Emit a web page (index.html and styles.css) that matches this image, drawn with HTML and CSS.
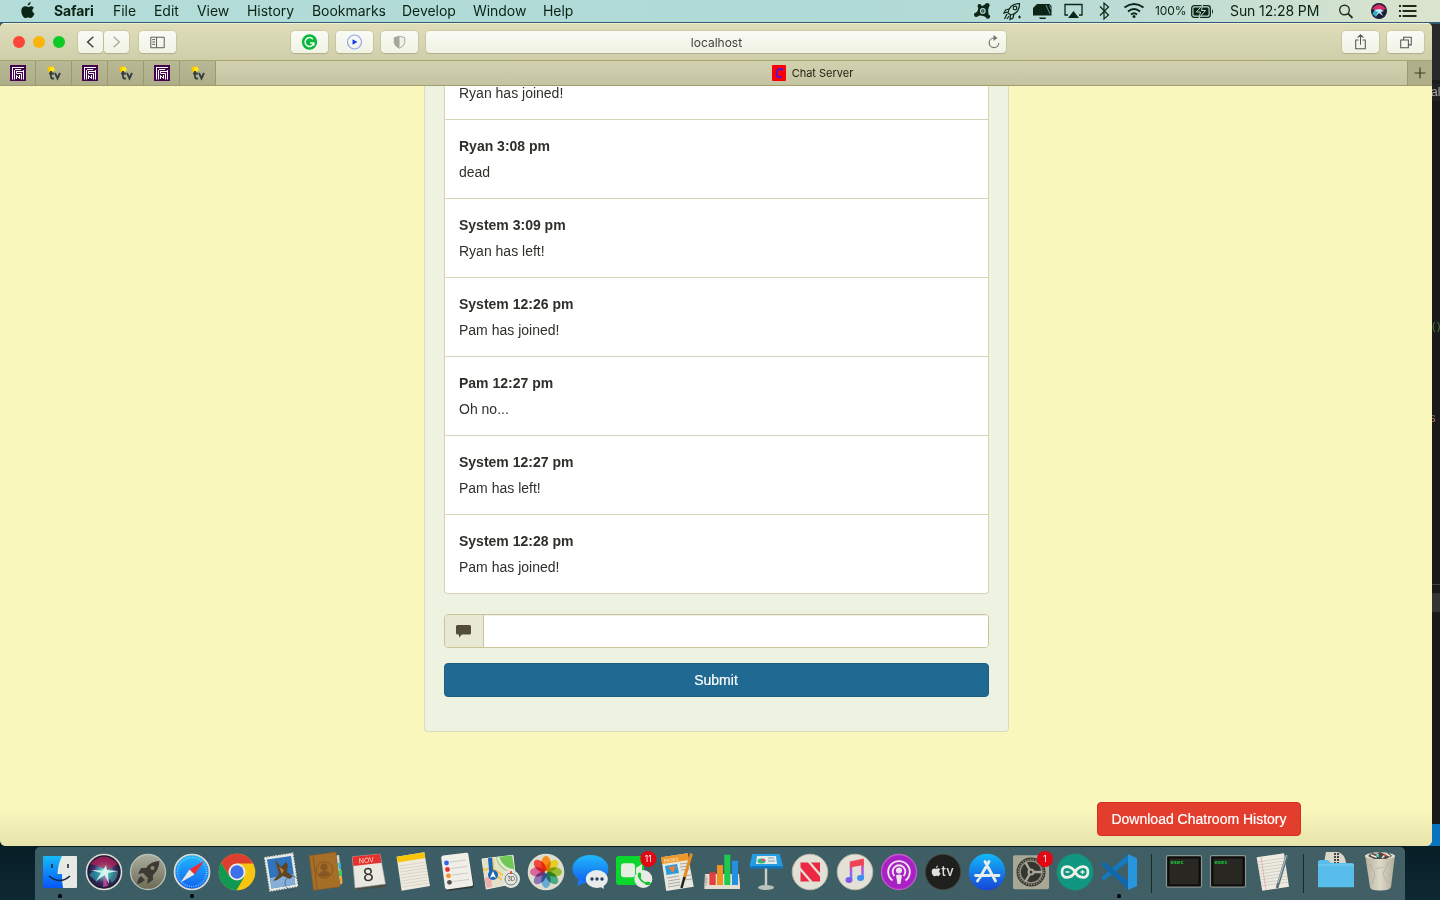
FILE: index.html
```html
<!DOCTYPE html>
<html lang="en">
<head>
<meta charset="utf-8">
<title>Chat Server</title>
<link rel="stylesheet" href="styles.css">
</head>
<body>
<div class="desktop">
  <header class="menubar">
    <svg class="apple" viewBox="0 0 14 17"><path d="M9.700 0C9.800 1.700 8.400 3.500 6.700 3.600 6.600 1.900 8 .3 9.700 0ZM12.900 5.800C10.600 7.300 11 10.500 13.500 11.500 12.700 13.800 11.300 16 9.800 16 8.800 16 8.400 15.400 7.200 15.400S5.500 16 4.600 16C2.400 16 .3 12.200.3 8.900.3 5.900 2.200 4.300 4.200 4.300 5.400 4.300 6.300 5 7.200 5S9 4.200 10.200 4.200C11.300 4.200 12.300 4.800 12.900 5.800Z"/></svg>
    <nav class="menus">
      <b class="m-safari">Safari</b><span class="m-file">File</span><span class="m-edit">Edit</span><span class="m-view">View</span><span class="m-history">History</span><span class="m-bookmarks">Bookmarks</span><span class="m-develop">Develop</span><span class="m-window">Window</span><span>Help</span>
    </nav>
    <svg class="status" viewBox="0 0 178 22">
      <path d="M6 6Q10 7 13.500 4L17 6.500Q15.500 10 16.500 14L13.500 17Q10 14.500 5 16L3.500 13.500Q7 10 6 6Z"/><circle cx="15.300" cy="5.200" r="2.300"/><circle cx="7.500" cy="6" r="2"/><circle cx="4.300" cy="14.800" r="2.300"/><circle cx="15.800" cy="16.500" r="2.300"/><circle cx="10.800" cy="11" r="2.300" fill="none" stroke="#b4dbd5" stroke-width="1.200"/><circle cx="10.800" cy="11" r=".8" fill="#b4dbd5"/>
      <g fill="none" stroke="#0b2517" stroke-width="1.200"><path d="M36 13C37 7 41 3.500 47.500 3.500 47.500 10 44 14 39 15Z"/><circle cx="43" cy="8" r="1.800"/><path d="M37 9 33.500 10 32 13 36 12M42 14 41 18 38 19.500 38.500 15M35 14 32.500 19M37 16 35 19"/></g><path d="M46 17h3M47.500 15.500v3" stroke="#0b2517"/>
      <path d="M65 4H77.500L79.500 6V15.500H61V8ZM67 17.500H73.500L74 19H68Z"/><path d="M74 5 78 14M77.500 5.500 79 9" stroke="#b4dbd5" stroke-width=".6"/>
      <path d="M96 15H93V4.500H110V15H107" fill="none" stroke="#0b2517" stroke-width="1.300"/><path d="M101.500 11 107 18H96Z"/>
      <path d="M128 6.500 136.500 15 132 19V3L136.500 7 128 15.500" fill="none" stroke="#0b2517" stroke-width="1.200"/>
      <g fill="none" stroke="#0b2517" stroke-width="2"><path d="M152.500 7.500Q162 .5 171.500 7.500M156 11.500Q162 6.500 168 11.500M159 14.500Q162 12 165 14.500"/></g><circle cx="162" cy="16.500" r="1.500"/>
    </svg>
    <span class="pct">100%</span>
    <svg class="battery" viewBox="0 0 23 13"><rect x=".7" y=".7" width="18.600" height="11.600" rx="2.500" fill="none" stroke="#10291a" stroke-width="1.300"/><rect x="2.500" y="2.500" width="15" height="8" rx="1"/><path d="M21 4q2 2.500 0 5Z"/><path d="M11.500 0 5.500 7H9.500L8 13 14.500 5.500H10.500Z" stroke="#c3dfd3" stroke-width="1"/></svg>
    <span class="clock">Sun 12:28 PM</span>
    <svg class="tray" viewBox="0 0 82 22">
      <circle cx="6.500" cy="10" r="4.800" fill="none" stroke="#253020" stroke-width="1.400"/><path d="M10 13.500 14.500 18" stroke="#253020" stroke-width="1.800"/>
      <circle cx="41" cy="11" r="8" fill="#1c1d36"/><path d="M34 9Q41 0 48 9L42 11Z" fill="#d72e66"/><path d="M34.500 14Q36 8 42 10L38 17Z" fill="#3aa8c9"/><path d="M36 10 42 9 46 11 43 12 45 16 41 13 38 16 40 12Z" fill="#bdeeff"/>
      <path d="M64.500 6h14M64.500 11h14M64.500 16h14" stroke="#202b17" stroke-width="2"/><path d="M61 6h2M61 11h2M61 16h2" stroke="#202b17" stroke-width="2"/>
    </svg>
  </header>

  <aside class="editor"><i class="e-title">al</i><i class="e-paren">()</i><i class="e-str">s</i><div class="e-panel"></div><div class="e-status"></div></aside>

  <section class="browser">
    <div class="toolbar">
      <div class="lights"><i class="red"></i><i class="amber"></i><i class="green"></i></div>
      <div class="history-buttons">
        <button class="tb half"><svg viewBox="0 0 26 23"><path d="M16 6 10 11.500 16 17" fill="none" stroke="#444" stroke-width="1.600"/></svg></button>
        <button class="tb half"><svg viewBox="0 0 26 23"><path d="M10 6 16 11.500 10 17" fill="none" stroke="#aaa99f" stroke-width="1.400"/></svg></button>
      </div>
      <button class="tb sidebar"><svg viewBox="0 0 37 23"><path d="M11.500 6.500H25.500V17.500H11.500ZM17.500 6.500V17.500M13 9h3M13 11.500h3M13 14h3" fill="none" stroke="#555"/></svg></button>
      <div class="extensions">
        <button class="tb"><svg viewBox="0 0 38 23"><circle cx="19" cy="11.500" r="8" fill="#07b83b"/><path d="M22.500 8.500A4.600 4.600 0 1 0 23.500 12.500H19.500M23.500 12V15.500" fill="none" stroke="#f0fff2" stroke-width="1.600"/></svg></button>
        <button class="tb"><svg viewBox="0 0 38 23"><circle cx="19" cy="11.500" r="7.300" fill="none" stroke="#91a4ef" stroke-width="1.200"/><path d="M17 8.500 22 11.500 17 14.500Z" fill="#1538ee"/></svg></button>
        <button class="tb"><svg viewBox="0 0 38 23"><path d="M19 5.500 24.500 7V12Q24 16 19 18 14 16 13.500 12V7Z" fill="#f2f2e9" stroke="#a4a59b"/><path d="M19 5.500V18Q14 16 13.500 12V7Z" fill="#a4a59b"/></svg></button>
      </div>
      <div class="address"><span>localhost</span><svg viewBox="0 0 12 14"><path d="M7 3H6A4.800 4.800 0 1 0 10.800 8" fill="none" stroke="#74746c" stroke-width="1.200"/><path d="M5.500 0 9.500 3 5.500 6Z" fill="#74746c"/></svg></div>
      <div class="actions">
        <button class="tb"><svg viewBox="0 0 37 23"><path d="M16.500 9.500H13.500V18.500H23.500V9.500H20.500M18.500 14.500V4.500M15.500 7 18.500 4 21.500 7" fill="none" stroke="#555" stroke-width="1.100"/></svg></button>
        <button class="tb"><svg viewBox="0 0 37 23"><path d="M13.500 9.500H21.500V17.500H13.500ZM16.500 9V6.500H24.500V14.500H22" fill="none" stroke="#555" stroke-width="1.100"/></svg></button>
      </div>
    </div>
    <svg class="defs"><defs>
      <symbol id="hall" viewBox="0 0 16 16"><rect width="16" height="16" fill="#44054f"/><path d="M2 2.500H14M2.500 2V14.500M13.500 5V14.500M5 4.500H11M4.500 5V14.500M7 6.500H13M6.500 6V8.500H11.500V14.500M6.500 14V10.500L9.500 13.500V10" fill="none" stroke="#fff" stroke-width="1"/></symbol>
      <symbol id="tv" viewBox="0 0 16 16"><path d="M1.500 2 5 1 9 5 4 8 2 7Z" fill="#ffc400"/><path d="M4 3 7 1.500 9 5 5 7Z" fill="#f8ef14"/><path d="M5 6V12Q5 14 8 13.500M3 8.500H8M9 8 11.500 13.500 14 8" fill="none" stroke="#303f42" stroke-width="1.900"/></symbol>
    </defs></svg>
    <div class="tabs">
      <div class="pin"><svg><use href="#hall"/></svg></div><div class="pin"><svg><use href="#tv"/></svg></div><div class="pin"><svg><use href="#hall"/></svg></div><div class="pin"><svg><use href="#tv"/></svg></div><div class="pin"><svg><use href="#hall"/></svg></div><div class="pin"><svg><use href="#tv"/></svg></div>
      <div class="active-tab"><svg viewBox="0 0 16 16"><rect x="1" width="14" height="16" rx="1" fill="#fb0007"/><path d="M11 6V4Q6 3 5.500 8T10.500 12" fill="none" stroke="#4b14e0" stroke-width="1.700"/></svg><span>Chat Server</span></div>
      <div class="new-tab"><svg viewBox="0 0 12 12"><path d="M.5 6h11M6 .5v11" stroke="#3d3d20" stroke-width="1.200"/></svg></div>
    </div>
    <main class="page">
      <div class="well">
        <ul class="messages">
          <li class="cut"><p>Ryan has joined!</p></li>
          <li><b>Ryan 3:08 pm</b><p>dead</p></li>
          <li><b>System 3:09 pm</b><p>Ryan has left!</p></li>
          <li><b>System 12:26 pm</b><p>Pam has joined!</p></li>
          <li><b>Pam 12:27 pm</b><p>Oh no...</p></li>
          <li><b>System 12:27 pm</b><p>Pam has left!</p></li>
          <li><b>System 12:28 pm</b><p>Pam has joined!</p></li>
        </ul>
        <div class="field"><span><svg viewBox="0 0 15 13"><path d="M1.500 0H13.500Q15 0 15 1.500V8Q15 9.500 13.500 9.500H6L3 12.500V9.500H1.500Q0 9.500 0 8V1.500Q0 0 1.500 0Z" fill="#524c39"/></svg></span><input type="text" aria-label="Message"></div>
        <button class="submit">Submit</button>
      </div>
      <button class="download">Download Chatroom History</button>
    </main>
  </section>

  <footer class="dock">
    <svg class="defs"><defs>
      <linearGradient id="blue" x2="0" y2="1"><stop stop-color="#20b9fb"/><stop offset="1" stop-color="#1260f0"/></linearGradient>
      <linearGradient id="finder" x2="0" y2="1"><stop stop-color="#17baf7"/><stop offset="1" stop-color="#0755fb"/></linearGradient>
      <linearGradient id="store" x2="0" y2="1"><stop stop-color="#12b9fa"/><stop offset="1" stop-color="#1744d8"/></linearGradient>
      <linearGradient id="rocket" x2="0" y2="1"><stop stop-color="#aaaea0"/><stop offset="1" stop-color="#6d6b55"/></linearGradient>
      <radialGradient id="siri"><stop stop-color="#e6ffff"/><stop offset=".25" stop-color="#54b8bd"/><stop offset=".6" stop-color="#42306a"/><stop offset="1" stop-color="#14152b"/></radialGradient>
      <linearGradient id="note" x2="0" y2="1"><stop stop-color="#fb4050"/><stop offset=".5" stop-color="#bd4fdc"/><stop offset="1" stop-color="#3b90ff"/></linearGradient>
      <linearGradient id="can" x2="1" y2="0"><stop stop-color="#b5b09c"/><stop offset=".5" stop-color="#dedac9"/><stop offset="1" stop-color="#b1ab98"/></linearGradient>
      <symbol id="exec" viewBox="0 0 44 53"><rect x="4.500" y="8.700" width="35" height="31.500" rx="1.500" fill="#0c0d0b" stroke="#8c9690" stroke-width="1.200"/><rect x="7.500" y="11.500" width="29" height="26" fill="#292722"/><text x="8.500" y="17.300" class="exec-text">exec</text></symbol>
    </defs></svg>
    <div class="app running"><svg viewBox="0 0 44 53"><rect x="5" y="9" width="34" height="32" rx="1" fill="url(#finder)"/><path d="M24 9H38Q39 9 39 10V40Q39 41 38 41H25Q24 35 24 27H19.500Q20 17 24 9Z" fill="#e7eae4"/><path d="M14 17v4M30 17v4" stroke="#123" stroke-width="1.500"/><path d="M11 29Q22 38 32 29" fill="none" stroke="#132538" stroke-width="1.500"/></svg></div>
    <div class="app"><svg viewBox="0 0 44 53"><circle cx="22" cy="25" r="17.500" fill="url(#siri)" stroke="#dad9d2" stroke-width="1.600"/><path d="M8 17Q22 2 36 17L25 23 16 19Z" fill="#c81f55" opacity=".65"/><path d="M7 28Q16 19 22 25L15 35Z" fill="#2397a5" opacity=".7"/><path d="M23 25 36 24Q36 31 30 36Z" fill="#34bfae" opacity=".5"/><path d="M22 25 26 39 21 40Z" fill="#ed4ea5" opacity=".7"/><path d="M9 23 21 23.500 24 18 25 23 36 24 26 26 27 37 22.500 28 14 34 19 26Z" fill="#dffbf3" opacity=".9"/></svg></div>
    <div class="app"><svg viewBox="0 0 44 53"><circle cx="22" cy="25" r="17.500" fill="url(#rocket)" stroke="#bcc0b4" stroke-width="1.300"/><path d="M33.500 14Q25 14 20 21L15 21 12 27 17 26 22 31 21 37 27 33V28Q33 23 33.500 14ZM15 29 19 33Q16 36 11 37 12 31 15 29Z" fill="#3c3b33"/><circle cx="26.500" cy="21" r="2" fill="#85887a"/></svg></div>
    <div class="app running"><svg viewBox="0 0 44 53"><circle cx="22" cy="25" r="17.500" fill="url(#blue)" stroke="#dfdcd0" stroke-width="1.700"/><circle cx="22" cy="25" r="14.500" fill="none" stroke="#9ce2f7" stroke-width="1.600" stroke-dasharray=".7 1.570"/><path d="M34 14 24.500 27.500 19.500 22.500Z" fill="#f32b31"/><path d="M10.500 35.500 19.500 22.500 24.500 27.500Z" fill="#e8e8e2"/></svg></div>
    <div class="app"><svg viewBox="0 0 44 53"><circle cx="22" cy="25" r="18.300" fill="#f8c60e"/><path d="M22 16.500H38.200A18.300 18.300 0 0 0 6.200 15.700L14.500 29.500Z" fill="#dd3e2e"/><path d="M6.200 15.700A18.300 18.300 0 0 0 21.500 43.300L29.500 29.500 14.500 29.500Z" fill="#119954"/><circle cx="22" cy="25" r="8.500" fill="#eceee7"/><circle cx="22" cy="25" r="6.700" fill="#3e70eb"/></svg></div>
    <div class="app"><svg viewBox="0 0 44 53"><path d="M5.700 10.700 33.700 6.300 38.700 39.300 11 44Z" fill="#e8e9e2" stroke="#e8e9e2" stroke-width="1.400" stroke-dasharray="1.600 1.100"/><path d="M8 12.500 32 9 36.300 37.500 12.500 41.500Z" fill="#2f74bd"/><path d="M11 31 35.300 27 36.300 37.500 12.500 41.500Z" fill="#86afd8"/><path d="M16 13 22 20 27 15 29 18 28 25 34 29 31 32 24 29 18 33 14 34 20 27Z" fill="#604525"/><path d="M20 20 25 23 23 27Z" fill="#b9823a"/><circle cx="33" cy="36" r="7" fill="none" stroke="#304d59" opacity=".6"/></svg></div>
    <div class="app"><svg viewBox="0 0 44 53"><path d="M31 9 36 8 39 37 33 38Z" fill="#d3dddd"/><path d="M35 16 38 16 38 22 36 22Z" fill="#23b7c9"/><path d="M36 23 39 23 39 29 36 29Z" fill="#42ce56"/><path d="M37 30 39 29 39.500 36 37 37Z" fill="#f0a62a"/><path d="M6.200 8.700 32.900 5 37.200 39.700 10.500 43.300Z" fill="#a76e27" stroke="#8a5a24" stroke-width=".6"/><path d="M10 9 14 42" stroke="#8c581f"/><circle cx="21.500" cy="23" r="8.300" fill="none" stroke="#875723"/><circle cx="21" cy="20" r="3.500" fill="#875723"/><path d="M15 28Q21 20 28 27 22 33 15 28Z" fill="#875723"/></svg></div>
    <div class="app"><svg viewBox="0 0 44 53"><path d="M7 36 39 34 39 40 9 43Z" fill="#4a4d43"/><path d="M5.400 9.700 33 7 38.500 37 8 41Z" fill="#e9e9e1" stroke="#a7a99d" stroke-width=".6"/><path d="M5.400 9.700 33 7 34.500 15.700 6.500 19Z" fill="#e6302d"/><text x="12" y="16.500" class="cal-month" transform="rotate(-5 12 16.500)">NOV</text><text x="15.700" y="34" class="cal-day" transform="rotate(-5 22 28)">8</text></svg></div>
    <div class="app"><svg viewBox="0 0 44 53"><path d="M5.600 9.700 33.300 5.300 39 39 10.600 43.700Z" fill="#eeeade"/><path d="M5.600 9.700 33.300 5.300 34.300 11 6.500 15.500Z" fill="#f8c50a"/><path d="M8 19 35 15M8.500 22 35.500 18M9 25 36 21M9 28 36 24M9.500 31 37 27M10 34 37 30M10 37 37.500 33M10.500 40 38 36" stroke="#c9c6b6" stroke-width=".6"/></svg></div>
    <div class="app"><svg viewBox="0 0 44 53"><path d="M7 10 33 7 39 38 37.500 41 12 44Z" fill="#303a36"/><path d="M8 8.500 31 5.700Q33 5.500 33.300 7L38 37Q38.300 38.700 37 39L12 42.500 10 41 6.200 11Q6 9 8 8.500Z" fill="#efeee7"/><path d="M15 15 31 13M16 21.500 32 19.500M17 28 33 26M18 34.500 34 32.500" stroke="#bbb" stroke-width=".7"/><circle cx="11.500" cy="16" r="2.400" fill="#3566e6"/><circle cx="12.500" cy="22.500" r="2.400" fill="#ec3131"/><circle cx="13.500" cy="28.800" r="2.400" fill="#f29329"/><circle cx="14.500" cy="35.300" r="2.400" fill="#54524b"/></svg></div>
    <div class="app"><svg viewBox="0 0 44 53"><path d="M3 12 34 8.300 37 36 7.300 42Z" fill="#e4dfc7" stroke="#f2eee0"/><path d="M17 10 33 8.500 36 25Q20 25 17 10Z" fill="#70c957"/><path d="M19 10Q22 22 36 24" fill="none" stroke="#e6e5d7" stroke-width="3"/><path d="M5 31 12 30 13 40 8 41Z" fill="#eaaead"/><path d="M13 11 15 26 23 33M4 23 13 21 35 36" fill="none" stroke="#f4c348" stroke-width="2"/><path d="M11 11 12.500 28" stroke="#1667b9" stroke-width="4"/><circle cx="14" cy="28" r="5" fill="#1764b8"/><path d="M14 24 17 31 14 29.500 11 31Z" fill="#fff"/><circle cx="32" cy="32" r="9" fill="#e7e5da"/><circle cx="32" cy="32" r="6" fill="none" stroke="#548393" stroke-width="1"/><path d="M32 24v3" stroke="#e32" stroke-width="1.500"/><text x="28.500" y="34" class="map-text">3D</text></svg></div>
    <div class="app"><svg viewBox="0 0 44 53"><circle cx="22" cy="25" r="18.300" fill="#dddccd"/><g class="petals"><ellipse cx="22" cy="16.500" rx="4.700" ry="7.500" fill="#f98b18"/><ellipse cx="22" cy="16.500" rx="4.700" ry="7.500" fill="#e4cf27" transform="rotate(45 22 25)"/><ellipse cx="22" cy="16.500" rx="4.700" ry="7.500" fill="#99be34" transform="rotate(90 22 25)"/><ellipse cx="22" cy="16.500" rx="4.700" ry="7.500" fill="#4ca982" transform="rotate(135 22 25)"/><ellipse cx="22" cy="16.500" rx="4.700" ry="7.500" fill="#6aa9d1" transform="rotate(180 22 25)"/><ellipse cx="22" cy="16.500" rx="4.700" ry="7.500" fill="#8d76b6" transform="rotate(225 22 25)"/><ellipse cx="22" cy="16.500" rx="4.700" ry="7.500" fill="#d9679d" transform="rotate(270 22 25)"/><ellipse cx="22" cy="16.500" rx="4.700" ry="7.500" fill="#f1463e" transform="rotate(315 22 25)"/></g></svg></div>
    <div class="app"><svg viewBox="0 0 44 53"><ellipse cx="22.400" cy="22" rx="18" ry="14" fill="url(#blue)"/><path d="M11 32 9 39 19 35Z" fill="#1479f3"/><ellipse cx="28.800" cy="32" rx="11" ry="9" fill="#e8edec"/><path d="M31 39 36 42 35 36Z" fill="#e8edec"/><g fill="#263f60"><circle cx="24" cy="32" r="1.700"/><circle cx="29" cy="32" r="1.700"/><circle cx="34" cy="32" r="1.700"/></g></svg></div>
    <div class="app"><svg viewBox="0 0 44 53"><rect x="4" y="9" width="28" height="29" rx="3" fill="#0bd62d"/><rect x="9" y="16.300" width="14" height="14" rx="3" fill="#e5ece0"/><path d="M24 21 30 17V29L24 26Z" fill="#e5ece0"/><circle cx="31.300" cy="32" r="9" fill="#e7ebe3"/><path d="M27 28Q28 35.500 35.500 36.500" fill="none" stroke="#13c32c" stroke-width="1.800"/><path d="M27.500 27v2.500M34.500 36.300h2.500" stroke="#13c32c" stroke-width="3.200" stroke-linecap="round"/><circle cx="36.300" cy="12" r="8" fill="#e30613"/><text x="36.300" y="15" class="badge">11</text></svg></div>
    <div class="app"><svg viewBox="0 0 44 53"><path d="M5.200 10.300 31.500 6.300 37.800 39.700 10.200 44Z" fill="#e9e8dd"/><path d="M5.200 10.300 31.500 6.300 33 13 6 17Z" fill="#ed982a"/><text x="8" y="15.500" class="pages-text" transform="rotate(-8 8 15.500)">PAGES</text><path d="M9 19 21 17 23 26 10.500 28Z" fill="#269bdf"/><path d="M12 20 20 19 17 26Z" fill="#ee7c31"/><path d="M24 17 33 16M24 20 33 19M25 23 34 22M11 31 23 29M12 34 24 32M12 37 24 35M12 40 24 38M28 29 35 28M28 33 36 32" stroke="#aaa" stroke-width="1"/><path d="M35.500 6.500 28 32" stroke="#e68a21" stroke-width="3"/><path d="M28.500 30 25.500 41" stroke="#222" stroke-width="2.500"/></svg></div>
    <div class="app"><svg viewBox="0 0 44 53"><path d="M5 27H39L40 38V42H4.400V38Z" fill="#e2ded1"/><path d="M5 32H8M5 35H8M6 28V39" stroke="#999" stroke-width=".7"/><rect x="9.400" y="25.300" width="6.300" height="12.700" fill="#e2403f"/><rect x="17" y="18" width="6" height="20" fill="#f29021"/><rect x="24.300" y="7.700" width="6" height="30.300" fill="#1ec951"/><rect x="32" y="13.700" width="6" height="24.300" fill="#2391e0"/></svg></div>
    <div class="app"><svg viewBox="0 0 44 53"><rect x="20.800" y="21" width="2.400" height="19" fill="#cbcfc8"/><ellipse cx="22" cy="40.500" rx="8" ry="2.500" fill="#b9c1bb"/><path d="M8.300 7H35.600L39 19H5.600Z" fill="#269de2"/><path d="M5.600 19H39V21.500H5.600Z" fill="#0d77c4"/><path d="M13 9H32L33 17H12Z" fill="#e6ebe5"/><ellipse cx="17.500" cy="14" rx="4" ry="2.500" fill="#36b875"/><path d="M17.500 14V11.500A4 2.500 0 0 1 21.500 14Z" fill="#e34b86"/><path d="M24 11H30M24 14H31" stroke="#7a9eb4"/></svg></div>
    <div class="app"><svg viewBox="0 0 44 53"><circle cx="22" cy="25" r="17.800" fill="#e3e1d6" stroke="#b8b8aa"/><path d="M12.500 15.500H20L32 29.500V34.500H24.500L12.500 20.500ZM23 15.500H32V26ZM12.500 24V34.500H21.500Z" fill="#ec2945"/></svg></div>
    <div class="app"><svg viewBox="0 0 44 53"><circle cx="22" cy="25" r="17.800" fill="#e3e1d6" stroke="#b8b8aa"/><path d="M18 33V15.500L29.500 13V31" fill="none" stroke="url(#note)" stroke-width="2.500"/><path d="M17 15.500 30.700 13V18L17 20.500Z" fill="#ee4352"/><ellipse cx="16" cy="33" rx="3.500" ry="3" fill="#805ae8"/><ellipse cx="27.500" cy="31" rx="3.500" ry="3" fill="#3c8ff0"/></svg></div>
    <div class="app"><svg viewBox="0 0 44 53"><circle cx="22" cy="25" r="17.500" fill="#a921c4" stroke="#c15dca" stroke-width="1.300"/><path d="M15.500 33.500A10.800 10.800 0 1 1 28.500 33.500M17.500 29A6.300 6.300 0 1 1 26.500 29" fill="none" stroke="#f0e4f0" stroke-width="1.900"/><circle cx="22" cy="23.500" r="3" fill="#f0e4f0"/><path d="M19 28.500Q22 26.500 25 28.500L23.500 37H20.500Z" fill="#f0e4f0"/></svg></div>
    <div class="app"><svg viewBox="0 0 44 53"><circle cx="22" cy="25" r="17.800" fill="#1f201e" stroke="#464b47"/><path transform="translate(10.500 18.500) scale(.67)" fill="#e2e0da" d="M9.700 0C9.800 1.700 8.400 3.500 6.700 3.600 6.600 1.900 8 .3 9.700 0ZM12.900 5.800C10.600 7.300 11 10.500 13.500 11.500 12.700 13.800 11.300 16 9.800 16 8.800 16 8.400 15.400 7.200 15.400S5.500 16 4.600 16C2.400 16 .3 12.200.3 8.900.3 5.900 2.200 4.300 4.200 4.300 5.400 4.300 6.300 5 7.200 5S9 4.200 10.200 4.200C11.300 4.200 12.300 4.800 12.900 5.800Z"/><text x="20.500" y="29" class="tv-text">tv</text></svg></div>
    <div class="app"><svg viewBox="0 0 44 53"><circle cx="22" cy="25" r="18.300" fill="url(#store)"/><path d="M20 14.500 30.500 34M24 14.500 15 30.500M10.500 28.500H25M29.500 28.500H34M13.500 32.500 12.500 34" stroke="#e9eeea" stroke-width="2.800" stroke-linecap="round"/></svg></div>
    <div class="app"><svg viewBox="0 0 44 53"><rect x="4" y="8.300" width="36" height="34" rx="2" fill="#a8a795"/><circle cx="22" cy="25" r="14.500" fill="#35352f"/><circle cx="22" cy="25" r="11" fill="none" stroke="#8f8e7e" stroke-width="1.600"/><circle cx="22" cy="25" r="12.800" fill="none" stroke="#8f8e7e" stroke-width="1.500" stroke-dasharray="1.300 1.380"/><circle cx="22" cy="25" r="2.500" fill="none" stroke="#aaa999" stroke-width="2"/><path d="M24.500 25H33M20.500 22.500 16.500 15.500M20.500 27.500 16.500 34.500" stroke="#aaa999" stroke-width="2.400"/><circle cx="36" cy="12" r="8" fill="#e30613"/><text x="36" y="15" class="badge">1</text></svg></div>
    <div class="app"><svg viewBox="0 0 44 53"><circle cx="22" cy="25" r="18.500" fill="#109783" stroke="#35725f"/><path d="M22 25C18.500 18.500 9 17 9 25S18.500 31.500 22 25 35 17 35 25 25.500 31.500 22 25Z" fill="none" stroke="#edf0e6" stroke-width="2.700"/><path d="M12.500 25h4M27.500 25h4M29.500 23v4" stroke="#edf0e6" stroke-width="1.300"/></svg></div>
    <div class="app running"><svg viewBox="0 0 44 53"><path d="M4 30.500 7 33.500 32 14V7Z" fill="#1579bf"/><path d="M4 17.500 7 14.500 32 35V43Z" fill="#1168ac"/><path d="M31 7 40 11.300V39L31 43Z" fill="#2796df"/></svg></div>
    <i class="divider"></i>
    <div class="app"><svg viewBox="0 0 44 53"><use href="#exec"/></svg></div>
    <div class="app"><svg viewBox="0 0 44 53"><use href="#exec"/></svg></div>
    <div class="app"><svg viewBox="0 0 44 53"><path d="M6.600 10.300 34 6.300 39 39.700 12.300 43.700Z" fill="#eeece2"/><path d="M7 15 34 11M8 18 34 14M8 21 35 17M9 24 35 20M9 27 36 23M10 30 36 26M10 33 37 29M11 36 37 32M11 39 38 35" stroke="#c5c3b5" stroke-width=".7"/><path d="M11 10 16 43" stroke="#dda49a" stroke-width=".7"/><path d="M37 8 27 41" stroke="#586f79" stroke-width="2.700"/><path d="M36.500 8 28 36" stroke="#b5c5c9" stroke-width="1"/></svg></div>
    <i class="divider"></i>
    <div class="app"><svg viewBox="0 0 44 53"><path d="M12 5H24Q31 7 32 16H10Z" fill="#d9d7ca"/><path d="M21 6V16M24 6V16" stroke="#45453d" stroke-width="2" stroke-dasharray="2 1"/><path d="M4 15Q4 13 6 13H14L17 16H38Q40 16 40 18V40.300H4Z" fill="#58bdeb"/><path d="M4 18H40" stroke="#7ed1f4"/></svg></div>
    <div class="app"><svg viewBox="0 0 44 53"><path d="M7 8H37L33 40Q32 43.500 22 43.500T12 40Z" fill="url(#can)"/><ellipse cx="22" cy="9" rx="15" ry="3.700" fill="#dedbce"/><path d="M10 9 14 6 18 7 22 5 26 7 31 6 34 9 28 12H16Z" fill="#504c43"/><path d="M13 8 18 10 20 7M24 11 28 7 32 9" fill="none" stroke="#f3eee2" stroke-width="1.500"/><path d="M18 9h3" stroke="#3ac6b6" stroke-width="2"/><path d="M26 8h2" stroke="#e85638" stroke-width="2"/><path d="M12 17 17 28 14 37M30 16 25 27 30 36M17 22 25 20" fill="none" stroke="#a8a28e" stroke-width=".6"/></svg></div>
  </footer>
</div>
</body>
</html>
```

FILE: styles.css
```css
* { box-sizing: border-box; }
body { margin: 0; font-family: Inter, sans-serif; }
p, ul { margin: 0; padding: 0; list-style: none; }
button { font: inherit; letter-spacing: inherit; border: 0; padding: 0; }
svg { display: block; flex: none; }
.defs { position: absolute; width: 0; height: 0; }
.desktop { position: relative; width: 1440px; height: 900px; overflow: hidden; background: linear-gradient(#315a75 0, #315a75 40px, #071d25 840px, #0e2833 900px); }

.menubar { display: flex; align-items: center; height: 22px; background: linear-gradient(90deg, #b4ddd9, #b0dad7 60%, #bcdcd5 78%, #dbe4cd); color: #092314; fill: #0b2517; font-size: 14px; line-height: 22px; white-space: nowrap; }
.apple { width: 14px; height: 17px; margin: 0 19px 1px 21px; }
.menus { display: flex; width: 919px; letter-spacing: -.05px; }
.m-safari { width: 59px; letter-spacing: -.1px; }
.m-file { width: 41px; }
.m-edit { width: 43px; }
.m-view { width: 50px; }
.m-history { width: 65px; }
.m-bookmarks { width: 90px; }
.m-develop { width: 71px; }
.m-window { width: 70px; }
.status { width: 178px; height: 22px; margin-left: -1px; }
.pct { width: 36px; margin-left: 5px; font-size: 12px; letter-spacing: -.1px; }
.battery { width: 23px; height: 13px; }
.clock { width: 110px; margin-left: 16px; letter-spacing: -.1px; }
.tray { width: 82px; height: 22px; margin-left: -2px; }

.editor { position: absolute; left: 1422px; top: 24px; width: 18px; height: 822px; background: linear-gradient(#29292b 0 56px, #1a1b1b 56px 60px, #202122 60px 77px, #191a1a 77px); color: #aaa; overflow: hidden; }
.editor i { position: absolute; font: 12px "Liberation Sans", sans-serif; }
.editor .e-title { left: 9px; top: 61px; }
.editor .e-paren { left: 9px; top: 298px; color: #507e40; font: 10px "Liberation Mono", monospace; letter-spacing: -1.500px; }
.editor .e-str { left: 7px; top: 388px; color: #a97361; font-family: "Liberation Mono", monospace; }
.e-panel { margin-top: 560px; height: 28px; border-top: 1px solid #444; border-bottom: 19px solid #343536; }
.e-status { margin-top: 212px; height: 22px; background: #0873bf; }

.browser { position: absolute; left: 0; top: 23px; width: 1432px; height: 823px; display: flex; flex-direction: column; border-radius: 5px 5px 6px 6px; overflow: hidden; background: #faf7bd; }
.toolbar { display: flex; align-items: center; height: 37px; padding: 1px 8px 0 13px; background: linear-gradient(#f0efd4 0 1px, #dedcb9 1px, #d0cfab); }
.lights { display: flex; gap: 8px; width: 65px; }
.lights i { width: 12px; height: 12px; border-radius: 50%; }
.red { background: #fc4538; }
.amber { background: #fdb40a; }
.green { background: #0bca25; }
.history-buttons { display: flex; gap: 1px; }
.tb { width: 37px; height: 22px; border-radius: 4px; background: linear-gradient(#fafbf5, #f0f3e4); box-shadow: 0 0 0 .5px #bdba95, 0 1px 1px #aaa681; }
.tb svg { width: 100%; height: 22px; }
.tb.half { width: 25px; }
.sidebar { margin-left: 10px; }
.extensions { display: flex; gap: 8px; margin-left: 115px; }
.address { display: flex; align-items: center; justify-content: center; width: 580px; height: 22px; margin-left: 8px; padding-right: 6px; border-radius: 4px; background: linear-gradient(#fafbf6, #eef1e1); box-shadow: 0 0 0 .5px #bdba95, 0 1px 1px #aaa681; font-size: 12px; color: #414139; }
.address span { flex: 1; text-align: center; padding-left: 19px; }
.address svg { width: 12px; height: 14px; }
.actions { display: flex; gap: 8px; margin-left: auto; }
.tabs { display: flex; height: 26px; border-top: 1px solid #a9a66b; border-bottom: 1px solid #a19e69; background: linear-gradient(#d2d0b0, #c5c4a2); }
.pin { display: flex; align-items: center; justify-content: center; width: 36px; border-right: 1px solid #9c9a6c; background: linear-gradient(#b9b895, #aead89); }
.pin svg { width: 16px; height: 16px; }
.active-tab { flex: 1; display: flex; align-items: center; justify-content: center; gap: 5px; padding-left: 1px; font-size: 11px; color: #1e1e0d; }
.active-tab svg { width: 16px; height: 16px; }
.new-tab { display: flex; align-items: center; justify-content: center; width: 25px; padding-right: 1px; border-left: 1px solid #9c9a6c; background: #afae8b; }
.new-tab svg { width: 12px; height: 12px; }

.page { position: relative; flex: 1; overflow: hidden; background: linear-gradient(#faf7bd 725px, #e5e2ab); font: 14px/20px "Liberation Sans", Arial, sans-serif; color: #302f2a; }
.well { width: 585px; height: 646px; margin-left: 424px; padding: 0 19px; border: 1px solid #dbdcbd; border-top: 0; border-radius: 0 0 4px 4px; background: #eef2e1; }
.messages { height: 508px; border: 1px solid #d7d4b5; border-top: 0; border-radius: 0 0 4px 4px; background: #fff; overflow: hidden; }
.messages li { height: 79px; padding: 16px 14px; border-top: 1px solid #d7d4b5; }
.messages .cut { display: flow-root; height: 33px; padding-top: 0; border: 0; }
.cut p { margin-top: -3px; }
.messages b { display: block; margin-bottom: 6px; }
.field { display: flex; height: 34px; margin-top: 20px; border: 1px solid #c9c498; border-radius: 4px; overflow: hidden; background: #fff; }
.field span { display: flex; align-items: center; justify-content: center; width: 39px; padding-right: 1px; border-right: 1px solid #c9c498; background: #e7e9d4; }
.field svg { width: 15px; height: 13px; }
.field input { flex: 1; border: 0; outline: 0; background: #fff; box-shadow: inset 0 1px 1px #0001; }
.submit { display: block; width: 100%; height: 34px; margin-top: 15px; padding-right: 1px; border: 1px solid #1d6086; border-radius: 4px; background: #206992; color: #fff; -webkit-text-stroke: .2px #fff; }
.download { position: absolute; left: 1097px; top: 716px; width: 204px; height: 34px; border: 1px solid #d92c25; border-radius: 4px; background: #e33d2d; color: #fff; -webkit-text-stroke: .2px #fff; }

.dock { position: absolute; left: 35px; top: 847px; display: flex; width: 1370px; height: 53px; padding-left: 3px; border-radius: 5px 5px 0 0; background: linear-gradient(90deg, #3b5d66, #415f65); }
.app { position: relative; flex: none; width: 44.150px; height: 53px; }
.app svg { width: 44px; height: 53px; overflow: visible; }
.running::after { content: ""; position: absolute; left: 20px; top: 47px; width: 4px; height: 4px; border-radius: 1.500px; background: #050b0b; }
.divider { flex: none; width: 1px; height: 39px; margin: 7px 10px 0 9px; background: #122d21; }
.petals ellipse { mix-blend-mode: multiply; }
.petals { isolation: isolate; }
.exec-text { font: bold 5.500px "DejaVu Sans Mono", monospace; fill: #16c63e; }
.cal-month { font: 7px Inter, sans-serif; fill: #f9dcd4; }
.cal-day { font: 18px Inter, sans-serif; fill: #34342f; }
.map-text { font: 5.500px Inter, sans-serif; fill: #444; }
.badge { font: 8.500px Inter, sans-serif; fill: #fff; text-anchor: middle; }
.pages-text { font: bold 4.500px Inter, sans-serif; fill: #f8dba2; }
.tv-text { font: 500 13px Inter, sans-serif; fill: #e2e0da; }
```
